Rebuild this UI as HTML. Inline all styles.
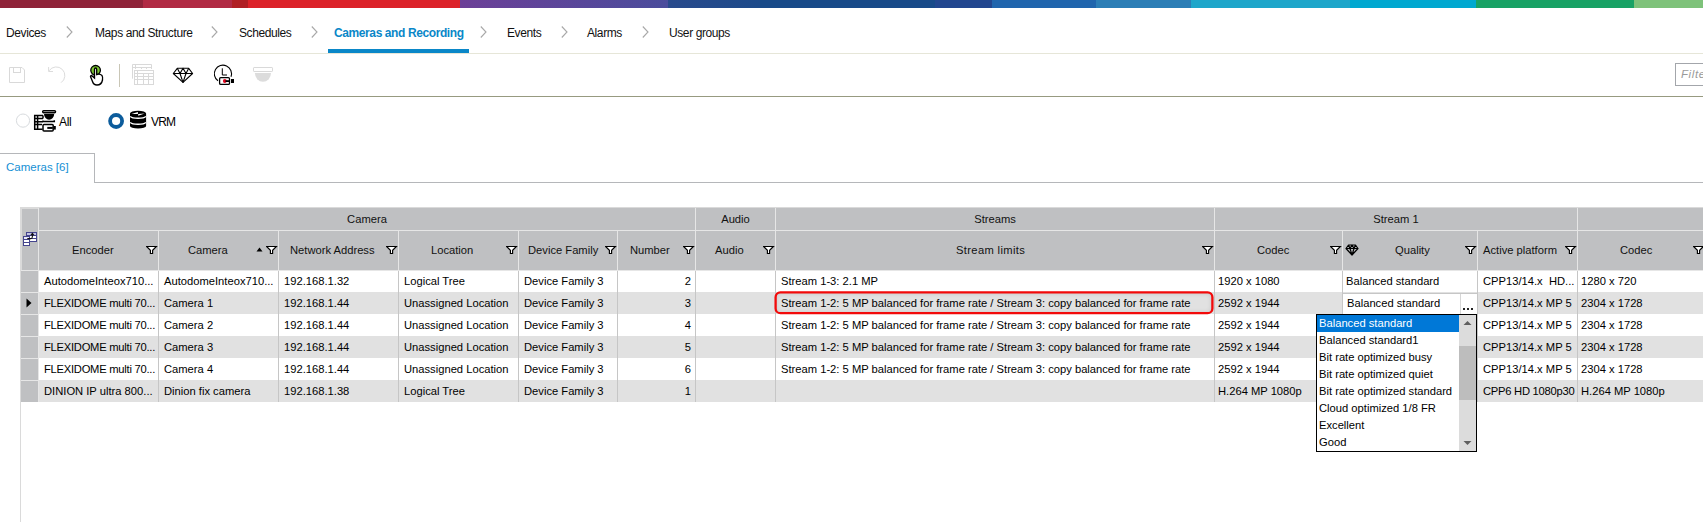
<!DOCTYPE html>
<html><head><meta charset="utf-8">
<style>
*{margin:0;padding:0;box-sizing:border-box}
html,body{width:1703px;height:522px;overflow:hidden;background:#fff}
body{position:relative;font-family:"Liberation Sans",sans-serif;font-size:11.2px;color:#000}
.a{position:absolute}
.t{position:absolute;white-space:nowrap;line-height:14px}
/* top bar */
#bar{position:absolute;left:0;top:0;width:1703px;height:8px;overflow:hidden}
#bar div{position:absolute;top:0;height:8px}
/* breadcrumbs */
.bc{position:absolute;top:26px;font-size:12px;letter-spacing:-0.4px;line-height:14px;color:#111;white-space:nowrap}
.hc{color:#111}
.b{color:#000}
.chev{position:absolute;top:26px;width:7px;height:12px}
</style></head><body>
<div id="bar">
  <div style="left:0;width:143px;background:#8f2339"></div>
  <div style="left:143px;width:90px;background:#b12a44"></div>
  <div style="left:232px;width:16px;background:#b01f24"></div>
  <div style="left:248px;width:212px;background:#dc2229"></div>
  <div style="left:460px;width:208px;background:linear-gradient(90deg,#6c3f97,#4a4c9c)"></div>
  <div style="left:668px;width:92px;background:linear-gradient(90deg,#294a8c,#1d4a8a)"></div>
  <div style="left:760px;width:175px;background:#184a89"></div>
  <div style="left:935px;width:57px;background:#22468f"></div>
  <div style="left:992px;width:104px;background:#2065ad"></div>
  <div style="left:1096px;width:95px;background:#2c7eb6"></div>
  <div style="left:1191px;width:159px;background:#1ea6ca"></div>
  <div style="left:1350px;width:126px;background:#00a8d0"></div>
  <div style="left:1476px;width:158px;background:#18a265"></div>
  <div style="left:1634px;width:69px;background:#7ec27a"></div>
</div>

<!-- breadcrumbs -->
<div class="bc" style="left:6px">Devices</div>
<div class="bc" style="left:95px">Maps and Structure</div>
<div class="bc" style="left:239px">Schedules</div>
<div class="bc" style="left:334px;color:#0a87c8;font-weight:bold">Cameras and Recording</div>
<div class="bc" style="left:507px">Events</div>
<div class="bc" style="left:587px">Alarms</div>
<div class="bc" style="left:669px">User groups</div>
<svg class="chev" style="left:66px" viewBox="0 0 7 12"><path d="M0.8 0.5 L6 6 L0.8 11.5" fill="none" stroke="#a8a8a8" stroke-width="1.1"/></svg>
<svg class="chev" style="left:211px" viewBox="0 0 7 12"><path d="M0.8 0.5 L6 6 L0.8 11.5" fill="none" stroke="#a8a8a8" stroke-width="1.1"/></svg>
<svg class="chev" style="left:311px" viewBox="0 0 7 12"><path d="M0.8 0.5 L6 6 L0.8 11.5" fill="none" stroke="#a8a8a8" stroke-width="1.1"/></svg>
<svg class="chev" style="left:480px" viewBox="0 0 7 12"><path d="M0.8 0.5 L6 6 L0.8 11.5" fill="none" stroke="#a8a8a8" stroke-width="1.1"/></svg>
<svg class="chev" style="left:561px" viewBox="0 0 7 12"><path d="M0.8 0.5 L6 6 L0.8 11.5" fill="none" stroke="#a8a8a8" stroke-width="1.1"/></svg>
<svg class="chev" style="left:642px" viewBox="0 0 7 12"><path d="M0.8 0.5 L6 6 L0.8 11.5" fill="none" stroke="#a8a8a8" stroke-width="1.1"/></svg>
<div class="a" style="left:328px;top:49px;width:141px;height:4px;background:#0a87c8"></div>
<div class="a" style="left:0;top:53px;width:1703px;height:1px;background:#e6e6d8"></div>

<!-- TOOLBAR -->
<svg class="a" style="left:0;top:54px" width="290" height="42" viewBox="0 54 290 42">
 <!-- save -->
 <path d="M9.5 67.5 H22 L24.5 70 V82.5 H9.5 Z" fill="none" stroke="#d9d9d9" stroke-width="1"/>
 <rect x="13.5" y="67.5" width="7" height="5" fill="none" stroke="#d9d9d9" stroke-width="1"/>
 <!-- undo -->
 <path d="M49.16 70.67 A8.6 8.6 0 1 1 61.1 82.64" fill="none" stroke="#dcdcdc" stroke-width="1"/>
 <path d="M48.6 67 V71.5 H53" fill="none" stroke="#dcdcdc" stroke-width="1"/>
 <!-- hand -->
 <circle cx="95.6" cy="70.3" r="4.8" fill="#7cc832" stroke="#000" stroke-width="1.3"/>
 <path d="M94.5 78 V69.5 Q94.5 68 95.6 68 Q96.7 68 96.7 69.5 V74.5 Q100 73.5 102 75.5 Q103 77 102.5 80 Q101.5 85 97 85 Q93.5 85 92.5 81.5 L90.5 76.5 Q90.5 75.5 91.5 75.5 Z" fill="#fff" stroke="#000" stroke-width="1.35"/>
 <!-- separator -->
 <rect x="119" y="64" width="1" height="23" fill="#c9c6b6"/>
 <!-- table icon -->
 <g fill="none" stroke="#d9d9d9" stroke-width="1">
  <path d="M132.5 78.7 V64.5 H151.5 V69"/>
  <path d="M132.5 67.5 H151.5 M135.5 64.5 V69 M141.5 67.5 V69 M146.5 67.5 V69"/>
  <rect x="134.5" y="70.5" width="19" height="14"/>
  <path d="M134.5 73.5 H153.5 M134.5 76.5 H153.5 M134.5 79.5 H153.5 M137.5 70.5 V84.5 M143.5 73.5 V84.5 M148.5 73.5 V84.5"/>
 </g>
 <!-- diamond -->
 <g fill="none" stroke="#000" stroke-width="1.1" stroke-linejoin="round">
  <path d="M177.3 68.3 H188.7 L192.6 73.5 L183 82.4 L173.3 73.5 Z"/>
  <path d="M173.3 73.5 H192.6 M177.3 68.3 L180 73.5 L183 68.3 L186 73.5 L188.7 68.3 M180 73.5 L183 82.4 L186 73.5"/>
 </g>
 <!-- clock recorder -->
 <path d="M218 80.8 A8.6 8.6 0 1 1 231 76.7" fill="none" stroke="#000" stroke-width="1.1"/>
 <path d="M222.3 68.3 V75 H227" fill="none" stroke="#000" stroke-width="1"/>
 <rect x="219.6" y="77.6" width="9.9" height="6.8" rx="1.2" fill="#fff" stroke="#000" stroke-width="1.3"/>
 <circle cx="224.8" cy="81" r="1.9" fill="#e3001b"/>
 <rect x="225.5" y="80.2" width="3.5" height="1.8" fill="#000"/>
 <rect x="231" y="79" width="3" height="4" fill="#000"/>
 <!-- dome -->
 <rect x="253.5" y="67.5" width="19" height="4" rx="0.6" fill="none" stroke="#d9d9d9" stroke-width="1"/>
 <path d="M254.9 72.9 H271 A8.05 8.9 0 0 1 254.9 72.9 Z" fill="#dcdcdc"/>
</svg>
<div class="a" style="left:1675px;top:63px;width:40px;height:23px;border:1px solid #a3a6ab"></div>
<div class="t" style="left:1681px;top:67px;font-style:italic;color:#9a9a9a;font-size:11.5px;letter-spacing:0.6px">Filter</div>
<div class="a" style="left:0;top:96px;width:1703px;height:1px;background:#979a80"></div>

<!-- RADIOS -->
<svg class="a" style="left:0;top:104px" width="190" height="32" viewBox="0 104 190 32">
 <circle cx="23" cy="120.6" r="6.6" fill="#fff" stroke="#d8dbde" stroke-width="1"/>
 <!-- all icon -->
 <g fill="none" stroke="#000" stroke-width="1.5">
  <path d="M43 115.6 H34.7 V129.3 H42.5"/>
  <path d="M37.6 115.6 V129.3 M34.7 118.6 H43 M34.7 121.7 H43 M34.7 124.6 H42 M43 115.6 V118.6"/>
  <rect x="42.7" y="110.7" width="12.8" height="2" rx="0.9"/>
  <path d="M43 121.6 H54.3 V120.3 M43 121.6 V120.5"/>
 </g>
 <path d="M44 114 H54.2 A5.1 5.8 0 0 1 44 114 Z" fill="#000"/>
 <rect x="43" y="124.6" width="10.2" height="6.5" rx="1" fill="#fff" stroke="#000" stroke-width="1.5"/>
 <rect x="47.3" y="126.9" width="5.5" height="2" fill="#000"/>
 <rect x="54" y="126" width="1.8" height="3.6" fill="#000"/>
 <!-- filled radio -->
 <circle cx="116.1" cy="121" r="6" fill="#fff" stroke="#0c5c9c" stroke-width="3.8"/>
 <!-- db icon -->
 <path d="M130 113.5 A8 2.8 0 0 1 146.1 113.5 V126 A8 2.6 0 0 1 130 126 Z" fill="#000"/>
 <path d="M130.3 116.3 A8 2.6 0 0 0 145.8 116.3" fill="none" stroke="#fff" stroke-width="1.3"/>
 <path d="M130.3 122.3 A8 2.6 0 0 0 145.8 122.3" fill="none" stroke="#fff" stroke-width="1.3"/>
 <path d="M131.4 113.9 L137.9 111.9 L137.9 114.1 Z M138.2 114 L144.6 113.6 L138.2 115.7 Z" fill="#fff"/>
</svg>
<div class="t" style="left:59px;top:115px;font-size:12px;letter-spacing:-0.3px">All</div>
<div class="t" style="left:151px;top:115px;font-size:12px;letter-spacing:-0.8px">VRM</div>

<!-- TAB -->
<div class="a" style="left:0;top:153px;width:95px;height:1px;background:#b5b7ba"></div>
<div class="a" style="left:94px;top:153px;width:1px;height:30px;background:#b5b7ba"></div>
<div class="a" style="left:94px;top:182px;width:1609px;height:1px;background:#b5b7ba"></div>
<div class="t" style="left:6px;top:160px;color:#1590d4;font-size:11.5px">Cameras [6]</div>

<!-- GRID -->
<div class="a" style="left:20px;top:207px;width:1683px;height:63px;background:#bfc0c2"></div>
<div class="a" style="left:20px;top:207px;width:1683px;height:1px;background:#dadada"></div>
<div class="a" style="left:20px;top:207px;width:2px;height:63px;background:#dadada"></div>
<div class="a" style="left:20px;top:207px;width:1px;height:315px;background:#dadada"></div>
<div class="a" style="left:22px;top:208px;width:16px;height:1px;background:#dadada"></div>
<div class="a" style="left:38px;top:208px;width:1px;height:194px;background:#e6e6e6"></div>
<div class="a" style="left:39px;top:230px;width:1664px;height:1px;background:#e6e6e6"></div>
<div class="a" style="left:21px;top:270px;width:1682px;height:1px;background:#e6e6e6"></div>
<div class="a" style="left:695px;top:208px;width:1px;height:22px;background:#e6e6e6"></div>
<div class="a" style="left:775px;top:208px;width:1px;height:22px;background:#e6e6e6"></div>
<div class="a" style="left:1214px;top:208px;width:1px;height:22px;background:#e6e6e6"></div>
<div class="a" style="left:1577px;top:208px;width:1px;height:22px;background:#e6e6e6"></div>
<div class="a" style="left:158px;top:231px;width:1px;height:39px;background:#e6e6e6"></div>
<div class="a" style="left:278px;top:231px;width:1px;height:39px;background:#e6e6e6"></div>
<div class="a" style="left:398px;top:231px;width:1px;height:39px;background:#e6e6e6"></div>
<div class="a" style="left:518px;top:231px;width:1px;height:39px;background:#e6e6e6"></div>
<div class="a" style="left:617px;top:231px;width:1px;height:39px;background:#e6e6e6"></div>
<div class="a" style="left:695px;top:231px;width:1px;height:39px;background:#e6e6e6"></div>
<div class="a" style="left:775px;top:231px;width:1px;height:39px;background:#e6e6e6"></div>
<div class="a" style="left:1214px;top:231px;width:1px;height:39px;background:#e6e6e6"></div>
<div class="a" style="left:1342px;top:231px;width:1px;height:39px;background:#e6e6e6"></div>
<div class="a" style="left:1477px;top:231px;width:1px;height:39px;background:#e6e6e6"></div>
<div class="a" style="left:1577px;top:231px;width:1px;height:39px;background:#e6e6e6"></div>
<div class="t hc" style="left:39px;top:212px;width:656px;text-align:center">Camera</div>
<div class="t hc" style="left:696px;top:212px;width:79px;text-align:center">Audio</div>
<div class="t hc" style="left:776px;top:212px;width:438px;text-align:center">Streams</div>
<div class="t hc" style="left:1215px;top:212px;width:362px;text-align:center">Stream 1</div>
<div class="t hc" style="left:72px;top:243px">Encoder</div>
<svg class="a" style="left:146px;top:245px" width="12" height="10" viewBox="0 0 12 10"><path d="M0.6 1.5 H10.4 L6.6 5.3 V8.5 H4.4 V5.3 Z" fill="#fff" stroke="#000" stroke-width="1.15" stroke-linejoin="miter"/></svg>
<div class="t hc" style="left:188px;top:243px">Camera</div>
<svg class="a" style="left:266px;top:245px" width="12" height="10" viewBox="0 0 12 10"><path d="M0.6 1.5 H10.4 L6.6 5.3 V8.5 H4.4 V5.3 Z" fill="#fff" stroke="#000" stroke-width="1.15" stroke-linejoin="miter"/></svg>
<div class="t hc" style="left:290px;top:243px">Network Address</div>
<svg class="a" style="left:386px;top:245px" width="12" height="10" viewBox="0 0 12 10"><path d="M0.6 1.5 H10.4 L6.6 5.3 V8.5 H4.4 V5.3 Z" fill="#fff" stroke="#000" stroke-width="1.15" stroke-linejoin="miter"/></svg>
<div class="t hc" style="left:431px;top:243px">Location</div>
<svg class="a" style="left:506px;top:245px" width="12" height="10" viewBox="0 0 12 10"><path d="M0.6 1.5 H10.4 L6.6 5.3 V8.5 H4.4 V5.3 Z" fill="#fff" stroke="#000" stroke-width="1.15" stroke-linejoin="miter"/></svg>
<div class="t hc" style="left:528px;top:243px">Device Family</div>
<svg class="a" style="left:605px;top:245px" width="12" height="10" viewBox="0 0 12 10"><path d="M0.6 1.5 H10.4 L6.6 5.3 V8.5 H4.4 V5.3 Z" fill="#fff" stroke="#000" stroke-width="1.15" stroke-linejoin="miter"/></svg>
<div class="t hc" style="left:630px;top:243px">Number</div>
<svg class="a" style="left:683px;top:245px" width="12" height="10" viewBox="0 0 12 10"><path d="M0.6 1.5 H10.4 L6.6 5.3 V8.5 H4.4 V5.3 Z" fill="#fff" stroke="#000" stroke-width="1.15" stroke-linejoin="miter"/></svg>
<div class="t hc" style="left:715px;top:243px">Audio</div>
<svg class="a" style="left:763px;top:245px" width="12" height="10" viewBox="0 0 12 10"><path d="M0.6 1.5 H10.4 L6.6 5.3 V8.5 H4.4 V5.3 Z" fill="#fff" stroke="#000" stroke-width="1.15" stroke-linejoin="miter"/></svg>
<div class="t hc" style="left:956px;top:243px;letter-spacing:0.35px">Stream limits</div>
<svg class="a" style="left:1202px;top:245px" width="12" height="10" viewBox="0 0 12 10"><path d="M0.6 1.5 H10.4 L6.6 5.3 V8.5 H4.4 V5.3 Z" fill="#fff" stroke="#000" stroke-width="1.15" stroke-linejoin="miter"/></svg>
<div class="t hc" style="left:1257px;top:243px">Codec</div>
<svg class="a" style="left:1330px;top:245px" width="12" height="10" viewBox="0 0 12 10"><path d="M0.6 1.5 H10.4 L6.6 5.3 V8.5 H4.4 V5.3 Z" fill="#fff" stroke="#000" stroke-width="1.15" stroke-linejoin="miter"/></svg>
<div class="t hc" style="left:1395px;top:243px">Quality</div>
<svg class="a" style="left:1465px;top:245px" width="12" height="10" viewBox="0 0 12 10"><path d="M0.6 1.5 H10.4 L6.6 5.3 V8.5 H4.4 V5.3 Z" fill="#fff" stroke="#000" stroke-width="1.15" stroke-linejoin="miter"/></svg>
<div class="t hc" style="left:1483px;top:243px">Active platform</div>
<svg class="a" style="left:1565px;top:245px" width="12" height="10" viewBox="0 0 12 10"><path d="M0.6 1.5 H10.4 L6.6 5.3 V8.5 H4.4 V5.3 Z" fill="#fff" stroke="#000" stroke-width="1.15" stroke-linejoin="miter"/></svg>
<div class="t hc" style="left:1620px;top:243px">Codec</div>
<svg class="a" style="left:1693px;top:245px" width="12" height="10" viewBox="0 0 12 10"><path d="M0.6 1.5 H10.4 L6.6 5.3 V8.5 H4.4 V5.3 Z" fill="#fff" stroke="#000" stroke-width="1.15" stroke-linejoin="miter"/></svg>
<svg class="a" style="left:256px;top:247px" width="7" height="5" viewBox="0 0 7 5"><path d="M0.5 4.5 L3.5 0.5 L6.5 4.5 Z" fill="#000"/></svg>
<svg class="a" style="left:1345px;top:244px" width="14" height="12" viewBox="0 0 14 12"><g fill="none" stroke="#000" stroke-width="1.2" stroke-linejoin="round"><path d="M3.5 1 H10.5 L13 4.5 L7 11 L1 4.5 Z M1 4.5 H13 M3.5 1 L5 4.5 L7 1 L9 4.5 L10.5 1 M5 4.5 L7 11 L9 4.5"/></g></svg>
<svg class="a" style="left:20px;top:228px" width="20" height="22" viewBox="20 228 20 22"><rect x="26" y="232" width="11" height="10" fill="#45458e"/><rect x="27" y="233" width="9" height="2" fill="#c4c4e6"/><rect x="27" y="236" width="9" height="2" fill="#fff"/><rect x="27" y="239" width="9" height="2" fill="#fff"/><rect x="23" y="236" width="7" height="10" fill="#45458e"/><rect x="24" y="237" width="5" height="2" fill="#e8e8f8"/><rect x="24" y="240" width="5" height="2" fill="#fff"/><rect x="24" y="243" width="5" height="2" fill="#fff"/><path d="M27.3 238.6 H30.8 Q32.4 238.6 32.4 236.5 V234.8" fill="none" stroke="#111" stroke-width="1.1"/><path d="M30.2 235.2 L32.4 232.6 L34.6 235.2 Z" fill="#111"/></svg>
<div class="a" style="left:21px;top:270px;width:17px;height:1px;background:#e6e6e6"></div>
<div class="a" style="left:21px;top:271px;width:17px;height:21px;background:#bfc0c2"></div>
<div class="a" style="left:39px;top:271px;width:1664px;height:21px;background:#fff"></div>
<div class="t b" style="left:44px;top:274px;">AutodomeInteox710...</div>
<div class="t b" style="left:164px;top:274px;">AutodomeInteox710...</div>
<div class="t b" style="left:284px;top:274px;">192.168.1.32</div>
<div class="t b" style="left:404px;top:274px;">Logical Tree</div>
<div class="t b" style="left:524px;top:274px;">Device Family 3</div>
<div class="t b" style="left:617px;top:274px;width:74px;text-align:right">2</div>
<div class="t b" style="left:781px;top:274px;">Stream 1-3: 2.1 MP</div>
<div class="t b" style="left:1218px;top:274px;">1920 x 1080</div>
<div class="t b" style="left:1346px;top:274px;">Balanced standard</div>
<div class="t b" style="left:1483px;top:274px;">CPP13/14.x&nbsp; HD...</div>
<div class="t b" style="left:1581px;top:274px;">1280 x 720</div>
<div class="a" style="left:21px;top:292px;width:17px;height:1px;background:#e6e6e6"></div>
<div class="a" style="left:21px;top:293px;width:17px;height:21px;background:#bfc0c2"></div>
<div class="a" style="left:39px;top:292px;width:1664px;height:22px;background:#e1e1e1"></div>
<div class="t b" style="left:44px;top:296px; letter-spacing:-0.25px">FLEXIDOME multi 70...</div>
<div class="t b" style="left:164px;top:296px;">Camera 1</div>
<div class="t b" style="left:284px;top:296px;">192.168.1.44</div>
<div class="t b" style="left:404px;top:296px;">Unassigned Location</div>
<div class="t b" style="left:524px;top:296px;">Device Family 3</div>
<div class="t b" style="left:617px;top:296px;width:74px;text-align:right">3</div>
<div class="t b" style="left:781px;top:296px;">Stream 1-2: 5 MP balanced for frame rate / Stream 3: copy balanced for frame rate</div>
<div class="t b" style="left:1218px;top:296px;">2592 x 1944</div>
<div class="t b" style="left:1346px;top:296px;">Balanced standard</div>
<div class="t b" style="left:1483px;top:296px;">CPP13/14.x MP 5</div>
<div class="t b" style="left:1581px;top:296px;">2304 x 1728</div>
<div class="a" style="left:21px;top:314px;width:17px;height:1px;background:#e6e6e6"></div>
<div class="a" style="left:21px;top:315px;width:17px;height:21px;background:#bfc0c2"></div>
<div class="a" style="left:39px;top:314px;width:1664px;height:22px;background:#fff"></div>
<div class="t b" style="left:44px;top:318px; letter-spacing:-0.25px">FLEXIDOME multi 70...</div>
<div class="t b" style="left:164px;top:318px;">Camera 2</div>
<div class="t b" style="left:284px;top:318px;">192.168.1.44</div>
<div class="t b" style="left:404px;top:318px;">Unassigned Location</div>
<div class="t b" style="left:524px;top:318px;">Device Family 3</div>
<div class="t b" style="left:617px;top:318px;width:74px;text-align:right">4</div>
<div class="t b" style="left:781px;top:318px;">Stream 1-2: 5 MP balanced for frame rate / Stream 3: copy balanced for frame rate</div>
<div class="t b" style="left:1218px;top:318px;">2592 x 1944</div>
<div class="t b" style="left:1483px;top:318px;">CPP13/14.x MP 5</div>
<div class="t b" style="left:1581px;top:318px;">2304 x 1728</div>
<div class="a" style="left:21px;top:336px;width:17px;height:1px;background:#e6e6e6"></div>
<div class="a" style="left:21px;top:337px;width:17px;height:21px;background:#bfc0c2"></div>
<div class="a" style="left:39px;top:336px;width:1664px;height:22px;background:#e1e1e1"></div>
<div class="t b" style="left:44px;top:340px; letter-spacing:-0.25px">FLEXIDOME multi 70...</div>
<div class="t b" style="left:164px;top:340px;">Camera 3</div>
<div class="t b" style="left:284px;top:340px;">192.168.1.44</div>
<div class="t b" style="left:404px;top:340px;">Unassigned Location</div>
<div class="t b" style="left:524px;top:340px;">Device Family 3</div>
<div class="t b" style="left:617px;top:340px;width:74px;text-align:right">5</div>
<div class="t b" style="left:781px;top:340px;">Stream 1-2: 5 MP balanced for frame rate / Stream 3: copy balanced for frame rate</div>
<div class="t b" style="left:1218px;top:340px;">2592 x 1944</div>
<div class="t b" style="left:1483px;top:340px;">CPP13/14.x MP 5</div>
<div class="t b" style="left:1581px;top:340px;">2304 x 1728</div>
<div class="a" style="left:21px;top:358px;width:17px;height:1px;background:#e6e6e6"></div>
<div class="a" style="left:21px;top:359px;width:17px;height:21px;background:#bfc0c2"></div>
<div class="a" style="left:39px;top:358px;width:1664px;height:22px;background:#fff"></div>
<div class="t b" style="left:44px;top:362px; letter-spacing:-0.25px">FLEXIDOME multi 70...</div>
<div class="t b" style="left:164px;top:362px;">Camera 4</div>
<div class="t b" style="left:284px;top:362px;">192.168.1.44</div>
<div class="t b" style="left:404px;top:362px;">Unassigned Location</div>
<div class="t b" style="left:524px;top:362px;">Device Family 3</div>
<div class="t b" style="left:617px;top:362px;width:74px;text-align:right">6</div>
<div class="t b" style="left:781px;top:362px;">Stream 1-2: 5 MP balanced for frame rate / Stream 3: copy balanced for frame rate</div>
<div class="t b" style="left:1218px;top:362px;">2592 x 1944</div>
<div class="t b" style="left:1483px;top:362px;">CPP13/14.x MP 5</div>
<div class="t b" style="left:1581px;top:362px;">2304 x 1728</div>
<div class="a" style="left:21px;top:380px;width:17px;height:1px;background:#e6e6e6"></div>
<div class="a" style="left:21px;top:381px;width:17px;height:21px;background:#bfc0c2"></div>
<div class="a" style="left:39px;top:380px;width:1664px;height:22px;background:#e1e1e1"></div>
<div class="t b" style="left:44px;top:384px;">DINION IP ultra 800...</div>
<div class="t b" style="left:164px;top:384px;">Dinion fix camera</div>
<div class="t b" style="left:284px;top:384px;">192.168.1.38</div>
<div class="t b" style="left:404px;top:384px;">Logical Tree</div>
<div class="t b" style="left:524px;top:384px;">Device Family 3</div>
<div class="t b" style="left:617px;top:384px;width:74px;text-align:right">1</div>
<div class="t b" style="left:1218px;top:384px;">H.264 MP 1080p</div>
<div class="t b" style="left:1483px;top:384px; letter-spacing:-0.25px">CPP6 HD 1080p30</div>
<div class="t b" style="left:1581px;top:384px;">H.264 MP 1080p</div>
<div class="a" style="left:158px;top:271px;width:1px;height:131px;background:#c6c6c6"></div>
<div class="a" style="left:278px;top:271px;width:1px;height:131px;background:#c6c6c6"></div>
<div class="a" style="left:398px;top:271px;width:1px;height:131px;background:#c6c6c6"></div>
<div class="a" style="left:518px;top:271px;width:1px;height:131px;background:#c6c6c6"></div>
<div class="a" style="left:617px;top:271px;width:1px;height:131px;background:#c6c6c6"></div>
<div class="a" style="left:695px;top:271px;width:1px;height:131px;background:#c6c6c6"></div>
<div class="a" style="left:775px;top:271px;width:1px;height:131px;background:#c6c6c6"></div>
<div class="a" style="left:1214px;top:271px;width:1px;height:131px;background:#c6c6c6"></div>
<div class="a" style="left:1342px;top:271px;width:1px;height:131px;background:#c6c6c6"></div>
<div class="a" style="left:1477px;top:271px;width:1px;height:131px;background:#c6c6c6"></div>
<div class="a" style="left:1577px;top:271px;width:1px;height:131px;background:#c6c6c6"></div>
<div class="a" style="left:21px;top:402px;width:17px;height:0px;background:#e6e6e6"></div>
<svg class="a" style="left:26px;top:298px" width="6" height="10" viewBox="0 0 6 10"><path d="M0.5 0.5 L5.5 5 L0.5 9.5 Z" fill="#000"/></svg>

<!-- red highlight -->
<div class="a" style="left:776px;top:293px;width:436px;height:20px;border-radius:4px;box-shadow:inset 0 0 5px rgba(0,0,0,0.16)"></div>
<svg class="a" style="left:770px;top:287px" width="450" height="32" viewBox="770 287 450 32"><rect x="775.6" y="292.4" width="436.8" height="20.8" rx="4.8" fill="none" stroke="#f20a0a" stroke-width="2.3"/></svg>
<!-- quality editor -->
<div class="a" style="left:1343px;top:293px;width:134px;height:21px;background:#fff;border-top:1px solid #c6c6c6"></div>
<div class="t b" style="left:1347px;top:296px">Balanced standard</div>
<div class="a" style="left:1460px;top:294px;width:16px;height:20px;background:#fff;border-left:1px solid #d6d6d6"></div>
<div class="a" style="left:1463px;top:308px;width:2px;height:2px;background:#222"></div>
<div class="a" style="left:1467px;top:308px;width:2px;height:2px;background:#222"></div>
<div class="a" style="left:1471px;top:308px;width:2px;height:2px;background:#222"></div>
<!-- dropdown -->
<div class="a" style="left:1316px;top:314px;width:161px;height:138px;background:#fff;border:1px solid #000"></div>
<div class="a" style="left:1317px;top:315px;width:142px;height:17px;background:#0078d7"></div>
<div class="a" style="left:1459px;top:315px;width:17px;height:136px;background:#dcdcdc"></div>
<div class="a" style="left:1459px;top:346px;width:17px;height:54px;background:#bdbdbd"></div>
<svg class="a" style="left:1463px;top:320px" width="9" height="6" viewBox="0 0 9 6"><path d="M0.5 5 L4.5 1 L8.5 5 Z" fill="#5f5f5f"/></svg>
<svg class="a" style="left:1463px;top:440px" width="9" height="6" viewBox="0 0 9 6"><path d="M0.5 1 L4.5 5 L8.5 1 Z" fill="#5f5f5f"/></svg>
<div class="t" style="left:1319px;top:316px;color:#fff">Balanced standard</div>
<div class="t" style="left:1319px;top:333px">Balanced standard1</div>
<div class="t" style="left:1319px;top:350px">Bit rate optimized busy</div>
<div class="t" style="left:1319px;top:367px">Bit rate optimized quiet</div>
<div class="t" style="left:1319px;top:384px">Bit rate optimized standard</div>
<div class="t" style="left:1319px;top:401px">Cloud optimized 1/8 FR</div>
<div class="t" style="left:1319px;top:418px">Excellent</div>
<div class="t" style="left:1319px;top:435px">Good</div>


</body></html>
